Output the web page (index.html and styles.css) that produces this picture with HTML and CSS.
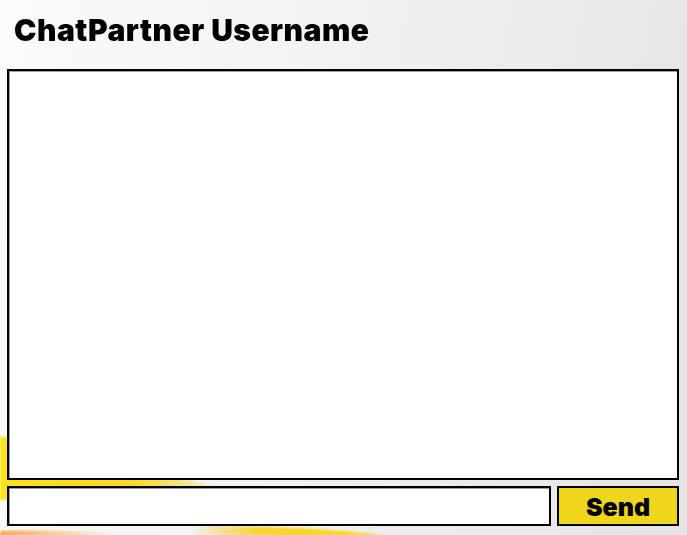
FILE: index.html
```html
<!DOCTYPE html>
<html lang="en">
<head>
<meta charset="utf-8">
<title>Chat</title>
<link rel="stylesheet" href="styles.css">
</head>
<body>
<div class="bg" aria-hidden="true">
  <svg width="687" height="535" viewBox="0 0 687 535">
    <defs>
      <linearGradient id="y1" x1="0" y1="0" x2="1" y2="0">
        <stop offset="0" stop-color="#fde21a"/>
        <stop offset="0.55" stop-color="#fbd922"/>
        <stop offset="1" stop-color="#fbd922" stop-opacity="0"/>
      </linearGradient>
      <linearGradient id="y2" x1="0" y1="0" x2="1" y2="0">
        <stop offset="0" stop-color="#f6c832" stop-opacity="0"/>
        <stop offset="0.35" stop-color="#fad428"/>
        <stop offset="1" stop-color="#fbd81e"/>
      </linearGradient>
      <linearGradient id="o1" x1="0" y1="0" x2="1" y2="0">
        <stop offset="0" stop-color="#f7a94a"/>
        <stop offset="1" stop-color="#f7a94a" stop-opacity="0"/>
      </linearGradient>
      <filter id="b" x="-10%" y="-50%" width="120%" height="200%"><feGaussianBlur stdDeviation="1.2"/></filter>
    </defs>
    <path d="M0 436 C 60 450 140 470 240 492 L 180 492 C 110 495 50 500 0 500 Z" fill="url(#y1)" filter="url(#b)"/>
    <path d="M190 526 C 260 526 330 528 390 536 L 200 536 Z" fill="url(#y2)" filter="url(#b)"/>
    <path d="M0 531 C 40 530 80 531 120 533 L 120 536 L 0 536 Z" fill="url(#o1)" filter="url(#b)"/>
  </svg>
</div>
<main class="page">
  <header class="head">
    <h1 class="title">ChatPartner Username</h1>
  </header>
  <div class="chatlog"></div>
  <form class="composer" onsubmit="return false">
    <input class="msg" type="text" aria-label="Message">
    <button class="send" type="submit">Send</button>
  </form>
</main>
</body>
</html>
```
FILE: styles.css
```css
html, body {
  margin: 0;
  padding: 0;
  height: 100%;
}
body {
  font-family: Inter, "Noto Sans", "Liberation Sans", sans-serif;
  background: linear-gradient(100deg, #fbfbfb 0%, #f3f3f3 40%, #e4e4e4 100%);
  overflow: hidden;
}
.bg {
  position: fixed;
  inset: 0;
  z-index: 0;
  pointer-events: none;
}
.bg svg { display: block; }
.page {
  position: relative;
  z-index: 1;
  padding: 0 8px 0 7px;
  display: flex;
  flex-direction: column;
}
.head {
  height: 69px;
  display: flex;
  align-items: flex-start;
}
.title {
  margin: 0;
  padding: 12px 0 0 7px;
  font-family: Inter, "Noto Sans", sans-serif;
  font-weight: 900;
  font-size: 30px;
  line-height: 36px;
  letter-spacing: 0.5px;
  color: #000;
}
.chatlog {
  box-sizing: border-box;
  height: 411px;
  background: #fff;
  border: 2px solid #000;
  box-shadow: inset 1px 1px 0 #a0a0a0;
}
.composer {
  margin: 6px 0 0;
  display: flex;
  gap: 6px;
  height: 40px;
}
.msg {
  box-sizing: border-box;
  flex: 1;
  height: 40px;
  margin: 0;
  border: 2px solid #000;
  background: #fff;
  box-shadow: inset 1px 1px 0 #a0a0a0;
  outline: none;
  font: 16px Inter, sans-serif;
  padding: 0 6px;
}
.send {
  box-sizing: border-box;
  width: 122px;
  height: 40px;
  margin: 0;
  border: 2px solid #000;
  background: #efd51b;
  font-family: Inter, "Noto Sans", sans-serif;
  font-weight: 900;
  font-size: 25px;
  line-height: 30px;
  color: #000;
  padding: 2px 0 0;
  cursor: pointer;
}
```
